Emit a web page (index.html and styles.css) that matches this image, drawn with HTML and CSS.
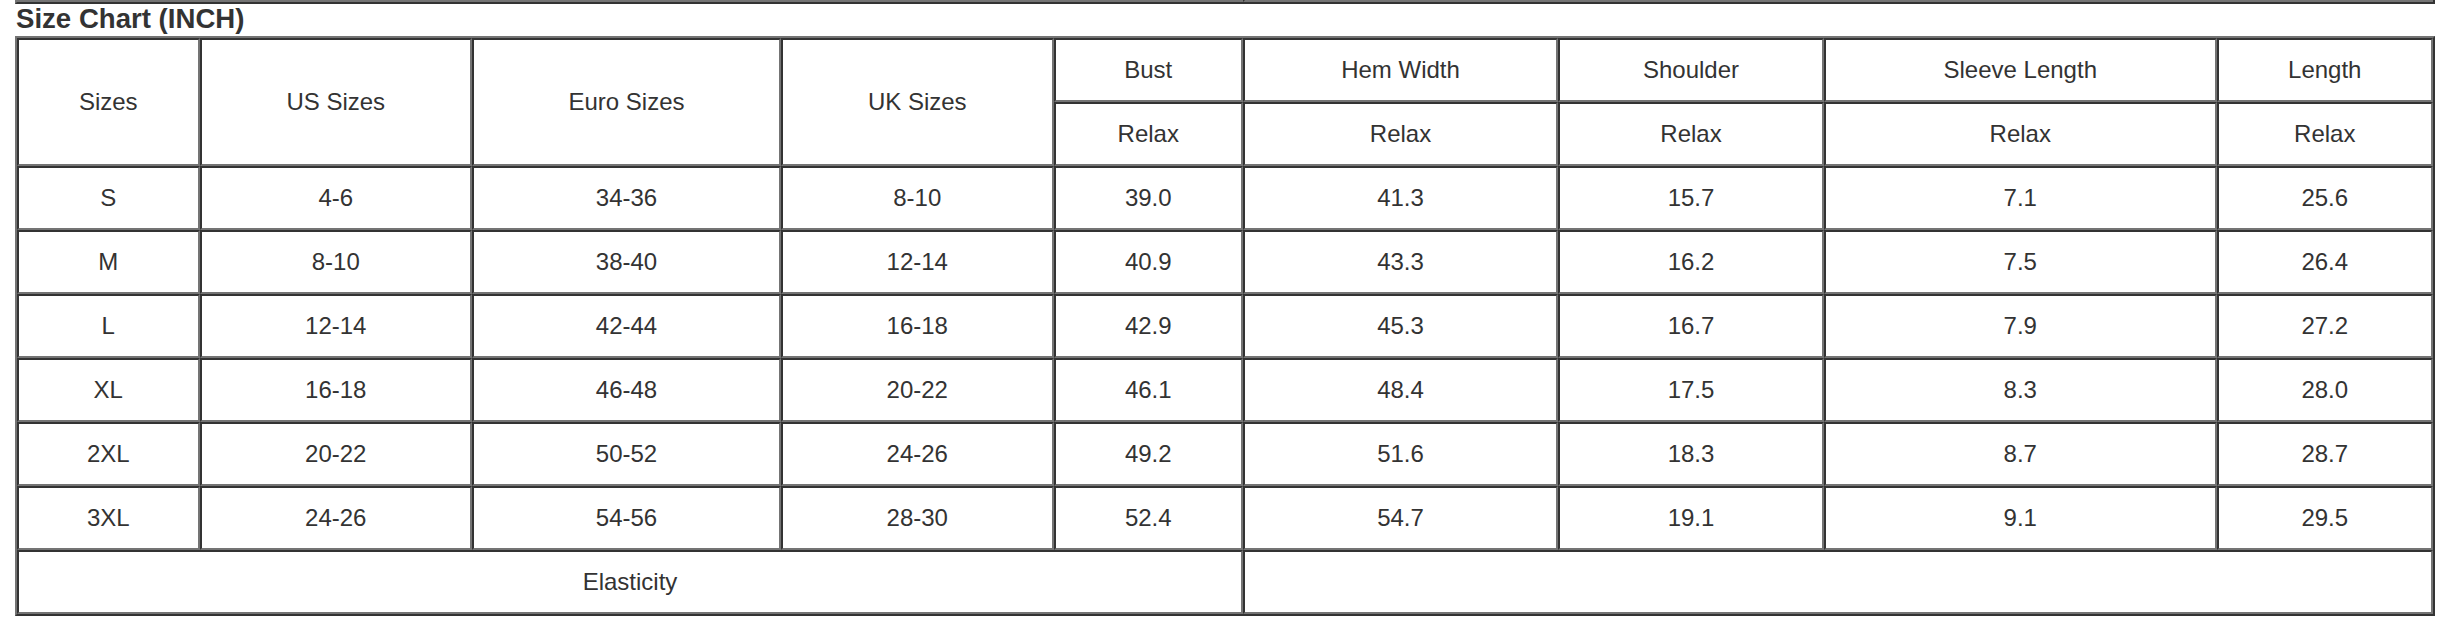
FILE: index.html
```html
<!DOCTYPE html>
<html lang="en">
<head>
<meta charset="utf-8">
<title>Size Chart (INCH)</title>
<link rel="stylesheet" href="styles.css">
</head>
<body>
<div class="page">
  <div class="prev-table">
    <div class="prev-cell prev-left"></div>
    <div class="prev-cell prev-right"></div>
  </div>
  <h2 class="title">Size Chart (INCH)</h2>
  <div class="chart">
    <div class="cell tall">Sizes</div>
    <div class="cell tall">US Sizes</div>
    <div class="cell tall">Euro Sizes</div>
    <div class="cell tall">UK Sizes</div>
    <div class="cell">Bust</div>
    <div class="cell">Hem Width</div>
    <div class="cell">Shoulder</div>
    <div class="cell">Sleeve Length</div>
    <div class="cell">Length</div>
    <div class="cell">Relax</div>
    <div class="cell">Relax</div>
    <div class="cell">Relax</div>
    <div class="cell">Relax</div>
    <div class="cell">Relax</div>

    <div class="cell">S</div><div class="cell">4-6</div><div class="cell">34-36</div><div class="cell">8-10</div><div class="cell">39.0</div><div class="cell">41.3</div><div class="cell">15.7</div><div class="cell">7.1</div><div class="cell">25.6</div>
    <div class="cell">M</div><div class="cell">8-10</div><div class="cell">38-40</div><div class="cell">12-14</div><div class="cell">40.9</div><div class="cell">43.3</div><div class="cell">16.2</div><div class="cell">7.5</div><div class="cell">26.4</div>
    <div class="cell">L</div><div class="cell">12-14</div><div class="cell">42-44</div><div class="cell">16-18</div><div class="cell">42.9</div><div class="cell">45.3</div><div class="cell">16.7</div><div class="cell">7.9</div><div class="cell">27.2</div>
    <div class="cell">XL</div><div class="cell">16-18</div><div class="cell">46-48</div><div class="cell">20-22</div><div class="cell">46.1</div><div class="cell">48.4</div><div class="cell">17.5</div><div class="cell">8.3</div><div class="cell">28.0</div>
    <div class="cell">2XL</div><div class="cell">20-22</div><div class="cell">50-52</div><div class="cell">24-26</div><div class="cell">49.2</div><div class="cell">51.6</div><div class="cell">18.3</div><div class="cell">8.7</div><div class="cell">28.7</div>
    <div class="cell">3XL</div><div class="cell">24-26</div><div class="cell">54-56</div><div class="cell">28-30</div><div class="cell">52.4</div><div class="cell">54.7</div><div class="cell">19.1</div><div class="cell">9.1</div><div class="cell">29.5</div>

    <div class="cell span5">Elasticity</div>
    <div class="cell span4"></div>
  </div>
</div>
</body>
</html>
```

FILE: styles.css
```css
html, body {
  margin: 0;
  padding: 0;
  background: #ffffff;
}

.page {
  padding-left: 15px;
  font-family: "Liberation Sans", Arial, sans-serif;
  color: #333333;
}

.prev-table {
  box-sizing: border-box;
  width: 2420px;
  height: 4px;
  display: flex;
  border-left: 2px solid #747474;
  border-right: 2px solid #333333;
  border-bottom: 2px solid #333333;
}

.prev-cell {
  box-sizing: border-box;
  height: 2px;
  border-bottom: 2px solid #747474;
}

.prev-left {
  width: 1226px;
  border-right: 2px solid #747474;
}

.prev-right {
  flex: 1;
  border-left: 2px solid #333333;
  border-right: 2px solid #747474;
}

.title {
  margin: 0 0 2px 1px;
  font-size: 27.6px;
  line-height: 30px;
  font-weight: bold;
  color: #333333;
}

.chart {
  box-sizing: border-box;
  width: 2420px;
  display: grid;
  grid-template-columns: 182.5px 272.5px 309px 272.5px 189.5px 315px 266px 392.5px 216.5px;
  grid-auto-rows: 64px;
  border: 2px solid;
  border-color: #747474 #333333 #333333 #747474;
}

.cell {
  box-sizing: border-box;
  display: flex;
  align-items: center;
  justify-content: center;
  border: 2px solid;
  border-color: #333333 #747474 #747474 #333333;
  font-size: 24px;
  color: #333333;
  white-space: nowrap;
}

.tall {
  grid-row: span 2;
}

.span5 {
  grid-column: span 5;
}

.span4 {
  grid-column: span 4;
}
```
